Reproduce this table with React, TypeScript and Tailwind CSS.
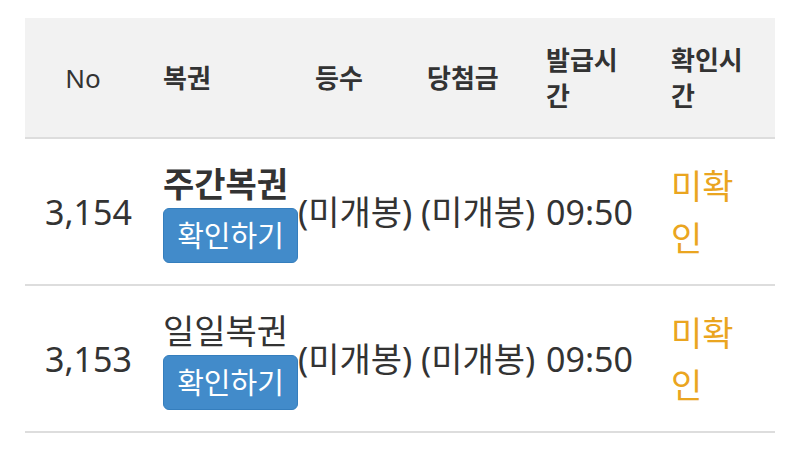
const ROWS = [
  { no: "3,154", name: "주간복권", bold: true, rank: "(미개봉)", prize: "(미개봉)", issued: "09:50", checked: "미확인" },
  { no: "3,153", name: "일일복권", bold: false, rank: "(미개봉)", prize: "(미개봉)", issued: "09:50", checked: "미확인" },
];

const COLS = "grid grid-cols-[118px_155px_123px_125px_125px_104px]";

export default function App() {
  return (
    <div
      className="w-[800px] h-[459px] bg-white pt-[18px] px-[25px] text-[#333333]"
      style={{ fontFamily: "'Noto Sans', 'Noto Sans CJK KR', sans-serif" }}
    >
      {/* header */}
      <div className={`${COLS} h-[121px] items-center bg-[#f2f2f2] border-b-2 border-[#dddddd] text-[26px] leading-[36px]`}>
        <div className="text-center font-normal pr-[2px]">No</div>
        <div className="pl-[20px] font-bold">복권</div>
        <div className="pl-[17px] font-bold">등수</div>
        <div className="pl-[6px] font-bold">당첨금</div>
        <div className="w-[90px] font-bold break-all">발급시간</div>
        <div className="w-[90px] font-bold break-all">확인시간</div>
      </div>

      {ROWS.map((r) => (
        <div key={r.no} className={`${COLS} h-[147px] items-center border-b-2 border-[#dddddd] text-[34px] leading-[44px]`}>
          <div className="pl-[20px]">{r.no}</div>
          <div className="pl-[20px] flex flex-col items-start pt-[2px]">
            <span className={r.bold ? "font-bold" : "font-normal"}>{r.name}</span>
            <button className="mt-[2px] h-[55px] w-[135px] rounded-[6px] bg-[#428bca] border border-[#357ebd] text-white text-[29px] leading-none">
              확인하기
            </button>
          </div>
          <div className="whitespace-nowrap">{r.rank}</div>
          <div className="whitespace-nowrap">{r.prize}</div>
          <div>{r.issued}</div>
          <div className="w-[80px] break-all text-[#eaa520] leading-[52px]">{r.checked}</div>
        </div>
      ))}
    </div>
  );
}
